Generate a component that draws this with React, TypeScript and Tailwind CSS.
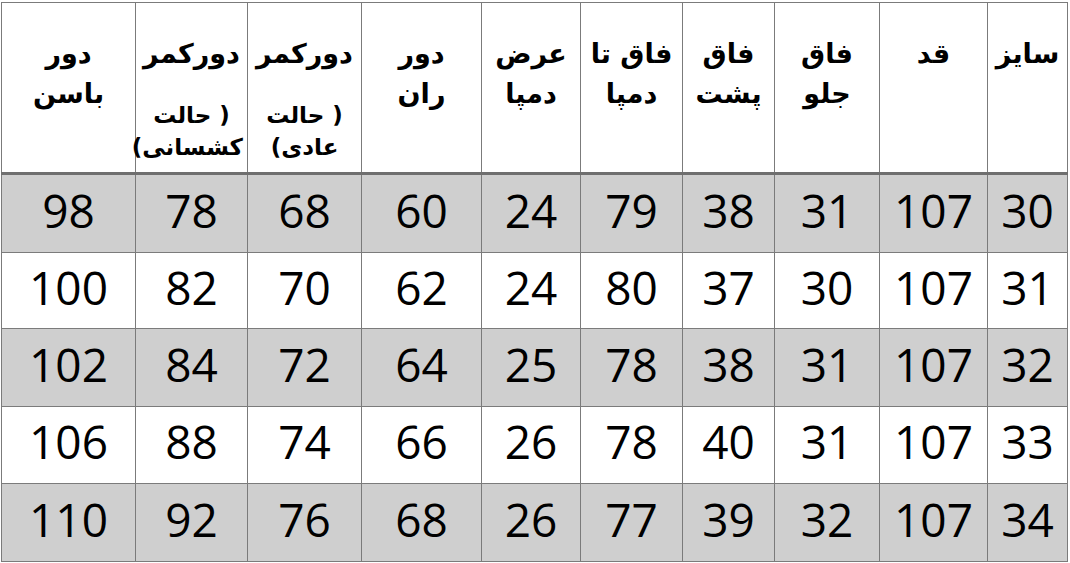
const headers: { main: string[]; sub?: string[] }[] = [
  { main: ['سایز'] },
  { main: ['قد'] },
  { main: ['فاق', 'جلو'] },
  { main: ['فاق', 'پشت'] },
  { main: ['فاق تا', 'دمپا'] },
  { main: ['عرض', 'دمپا'] },
  { main: ['دور', 'ران'] },
  { main: ['دورکمر'], sub: ['( حالت', 'عادی)'] },
  { main: ['دورکمر'], sub: ['( حالت', 'کشسانی)'] },
  { main: ['دور', 'باسن'] },
];

const widths = [80, 108, 105, 92, 102, 99, 120, 114, 112, 134];

const rows = [
  [30, 107, 31, 38, 79, 24, 60, 68, 78, 98],
  [31, 107, 30, 37, 80, 24, 62, 70, 82, 100],
  [32, 107, 31, 38, 78, 25, 64, 72, 84, 102],
  [33, 107, 31, 40, 78, 26, 66, 74, 88, 106],
  [34, 107, 32, 39, 77, 26, 68, 76, 92, 110],
];

const rowHeights = [79, 76, 78, 77, 78];

export default function App() {
  return (
    <div className="w-[1070px] h-[563px] bg-white pl-[1px] pt-[2px] overflow-hidden">
      <table dir="rtl" className="table-fixed border-collapse w-[1067px]">
        <colgroup>
          {widths.map((w, i) => (
            <col key={i} style={{ width: w }} />
          ))}
        </colgroup>
        <thead>
          <tr className="h-[171px]">
            {headers.map((h, i) => (
              <th
                key={i}
                className="align-top border border-[#7b7b7b] border-b-[3px] border-b-[#6f6f6f] pt-[31px] px-1 text-center font-bold text-black font-['DejaVu_Sans',sans-serif]"
              >
                {h.main.map((l, j) => (
                  <div key={j} className="text-[27px] leading-[40px]">
                    {l}
                  </div>
                ))}
                {h.sub && (
                  <div className="mt-[25px] text-[23px] leading-[32px]">
                    {h.sub.map((l, j) => (
                      <div key={j}>{l}</div>
                    ))}
                  </div>
                )}
              </th>
            ))}
          </tr>
        </thead>
        <tbody>
          {rows.map((r, i) => (
            <tr
              key={i}
              style={{ height: rowHeights[i] }}
              className={i % 2 === 0 ? 'bg-[#cfcfcf]' : 'bg-white'}
            >
              {r.map((v, j) => (
                <td
                  key={j}
                  className="border border-[#7b7b7b] pb-[8px] text-center align-middle text-black text-[46px] leading-none font-['Open_Sans',sans-serif]"
                >
                  {v}
                </td>
              ))}
            </tr>
          ))}
        </tbody>
      </table>
    </div>
  );
}
